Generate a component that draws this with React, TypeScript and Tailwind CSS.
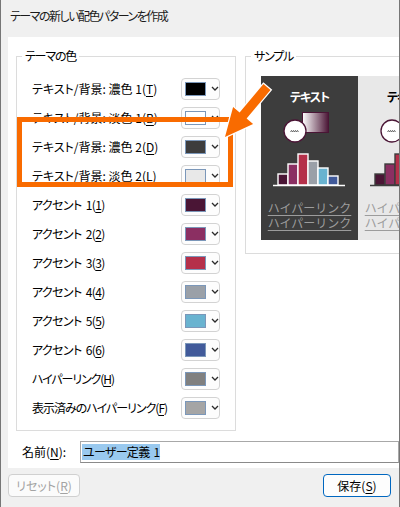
import React from 'react'

type Row = { label: string; key: string; color: string; track: string }

const rows: Row[] = [
  { label: 'テキスト/背景: 濃色 1', key: 'T', color: '#000000', track: '' },
  { label: 'テキスト/背景: 淡色 1', key: 'B', color: '#ffffff', track: '' },
  { label: 'テキスト/背景: 濃色 2', key: 'D', color: '#3d3d3d', track: '' },
  { label: 'テキスト/背景: 淡色 2', key: 'L', color: '#e8e8e8', track: '' },
  { label: 'アクセント 1', key: '1', color: '#4a1535', track: 'tracking-[-0.6px] [word-spacing:2px]' },
  { label: 'アクセント 2', key: '2', color: '#8b2f62', track: 'tracking-[-0.6px] [word-spacing:2px]' },
  { label: 'アクセント 3', key: '3', color: '#b5304a', track: 'tracking-[-0.6px] [word-spacing:2px]' },
  { label: 'アクセント 4', key: '4', color: '#9aa0a8', track: 'tracking-[-0.6px] [word-spacing:2px]' },
  { label: 'アクセント 5', key: '5', color: '#69b3d0', track: 'tracking-[-0.6px] [word-spacing:2px]' },
  { label: 'アクセント 6', key: '6', color: '#415a9a', track: 'tracking-[-0.6px] [word-spacing:2px]' },
  { label: 'ハイパーリンク', key: 'H', color: '#808080', track: 'tracking-[-1.1px]' },
  { label: '表示済みのハイパーリンク', key: 'F', color: '#a5a5a5', track: 'tracking-[-1px]' },
]

const bars = [
  { x: 17, y: 69, c: '#4a1535' },
  { x: 27, y: 59, c: '#8b2f62' },
  { x: 37, y: 49, c: '#b5304a' },
  { x: 47, y: 56, c: '#9aa0a8' },
  { x: 57, y: 63, c: '#69b3d0' },
  { x: 67, y: 71, c: '#415a9a' },
]

function Chevron() {
  return (
    <svg width="8" height="5" viewBox="0 0 8 5">
      <path d="M1 1 L4 4 L7 1" fill="none" stroke="#2b2b2b" strokeWidth="1.3" />
    </svg>
  )
}

function ColorButton({ color }: { color: string }) {
  return (
    <div className="w-[39px] h-[22px] shrink-0 rounded-[4px] border border-[#d3d3d3] bg-[#fdfdfd] flex items-center pl-[3px] gap-[5px]">
      <div className="w-[21px] h-[14px] border border-[#7b97b9]" style={{ backgroundColor: color }} />
      <Chevron />
    </div>
  )
}

function SamplePanel({ dark }: { dark: boolean }) {
  const line = dark ? '#ffffff' : '#3d3d3d'
  const id = dark ? 'gd' : 'gl'
  return (
    <div className={dark ? 'w-[97px] h-[164px] shrink-0 bg-[#3d3d3d] flex flex-col items-center' : 'w-[97px] h-[164px] shrink-0 bg-[#e8e8e8] flex flex-col items-center'}>
      <div className={dark ? 'mt-[13px] leading-[16px] font-bold text-white whitespace-nowrap tracking-[-1px]' : 'mt-[13px] leading-[16px] font-bold text-black whitespace-nowrap tracking-[-1px]'}>テキスト</div>
      <svg width="97" height="84" viewBox="0 0 97 84" className="block">
        <defs>
          <linearGradient id={id} x1="0" x2="1" y1="0" y2="0">
            <stop offset="0" stopColor={dark ? '#ffffff' : '#e8e8e8'} />
            <stop offset="1" stopColor="#4a1535" />
          </linearGradient>
        </defs>
        <rect x="41.5" y="7.5" width="26" height="20" fill={`url(#${id})`} stroke="#4a1535" strokeWidth="1" />
        <circle cx="34" cy="26" r="11" fill="#ffffff" stroke="#4a1535" strokeWidth="1.3" />
        <path d="M29.5 27 l1 -1.6 l1 1.6 l1 -1.6 l1 1.6 l1 -1.6 l1 1.6 l1 -1.6 l1 1.6" fill="none" stroke="#3a3a3a" strokeWidth="0.7" />
        {bars.map((b) => (
          <rect key={b.x} x={b.x} y={b.y} width="10" height={80 - b.y} fill={b.c} stroke={line} strokeWidth="1.4" />
        ))}
        <line x1="12" y1="80.5" x2="84" y2="80.5" stroke={line} strokeWidth="1.6" />
      </svg>
      <div className="mt-[11px] leading-[15px] text-[#9c9c9c] underline underline-offset-2 whitespace-nowrap [font-feature-settings:normal]">ハイパーリンク</div>
      <div className="leading-[15px] text-[#9c9c9c] underline underline-offset-2 whitespace-nowrap [font-feature-settings:normal]">ハイパーリンク</div>
    </div>
  )
}

export default function App() {
  return (
    <div className="relative w-[400px] h-[507px] overflow-hidden bg-[#f0f0f0] border-x border-[#767676] flex flex-col text-[12px] text-black font-['Noto_Sans_CJK_JP',sans-serif] [font-feature-settings:'palt']">
      <div className="h-[37px] shrink-0 flex items-center pl-[9px] pb-[5px] text-[#1a1a1a] tracking-[-1.5px]">テーマの新しい配色パターンを作成</div>

      <div className="ml-[7px] h-[431px] shrink-0 bg-white flex flex-col overflow-hidden">
        <div className="flex items-start pt-[11px]">
          <fieldset className="ml-[8px] w-[220px] h-[383px] shrink-0 border border-[#dcdcdc]">
            <legend className="ml-[5px] px-[3px] leading-[16px] tracking-[-1.2px]">テーマの色</legend>
            <div className="pt-[10px] pl-[15px] pr-[15px] flex flex-col">
              {rows.map((r) => (
                <div key={r.key} className="h-[29px] flex items-center justify-between">
                  <span className={`whitespace-nowrap ${r.track}`}>
                    {r.label}(<span className="underline underline-offset-2">{r.key}</span>)
                  </span>
                  <ColorButton color={r.color} />
                </div>
              ))}
            </div>
          </fieldset>

          <fieldset className="ml-[9px] w-[180px] h-[206px] shrink-0 border border-[#dcdcdc]">
            <legend className="ml-[5px] px-[3px] leading-[16px] tracking-[-1.2px]">サンプル</legend>
            <div className="pt-[12px] pl-[15px] flex">
              <SamplePanel dark />
              <SamplePanel dark={false} />
            </div>
          </fieldset>
        </div>

        <div className="mt-[10px] flex items-center h-[22px]">
          <span className="ml-[14px] w-[58px] whitespace-nowrap">
            名前(<span className="underline underline-offset-2">N</span>):
          </span>
          <div className="flex-1 h-[22px] border border-[#a8a8a8] border-b-[#8a8a8a] flex items-center pl-[1px]">
            <span className="bg-[#99c9ef] leading-[16px] px-px whitespace-nowrap tracking-[-0.7px] [word-spacing:2px]">ユーザー定義 1</span>
          </div>
        </div>
      </div>

      <div className="flex items-start pt-[6px]">
        <div className="ml-[7px] w-[72px] h-[23px] rounded-[4px] border border-[#d0d0d0] bg-[#fbfbfb] flex items-center justify-center text-[#a3a3a3] whitespace-nowrap">
          リセット(<span className="underline underline-offset-2">R</span>)
        </div>
        <div className="ml-auto mr-[8px] w-[68px] h-[23px] rounded-[4px] border border-[#0067c0] bg-[#fdfdfd] flex items-center justify-center whitespace-nowrap">
          保存(<span className="underline underline-offset-2">S</span>)
        </div>
      </div>

      <div className="absolute left-[16px] top-[117px] w-[216px] h-[70px] border-[5px] border-[#f96b00] pointer-events-none" />
      <svg className="absolute left-0 top-0 pointer-events-none" width="400" height="507" viewBox="0 0 400 507">
        <polygon
          points="224,137 232.1,107.1 238.6,112.6 262.5,84.1 269.5,89.9 245.6,118.4 252.1,123.9"
          fill="#f96b00"
          stroke="#ffffff"
          strokeWidth="2.5"
          strokeLinejoin="miter"
          paintOrder="stroke"
        />
      </svg>
    </div>
  )
}
